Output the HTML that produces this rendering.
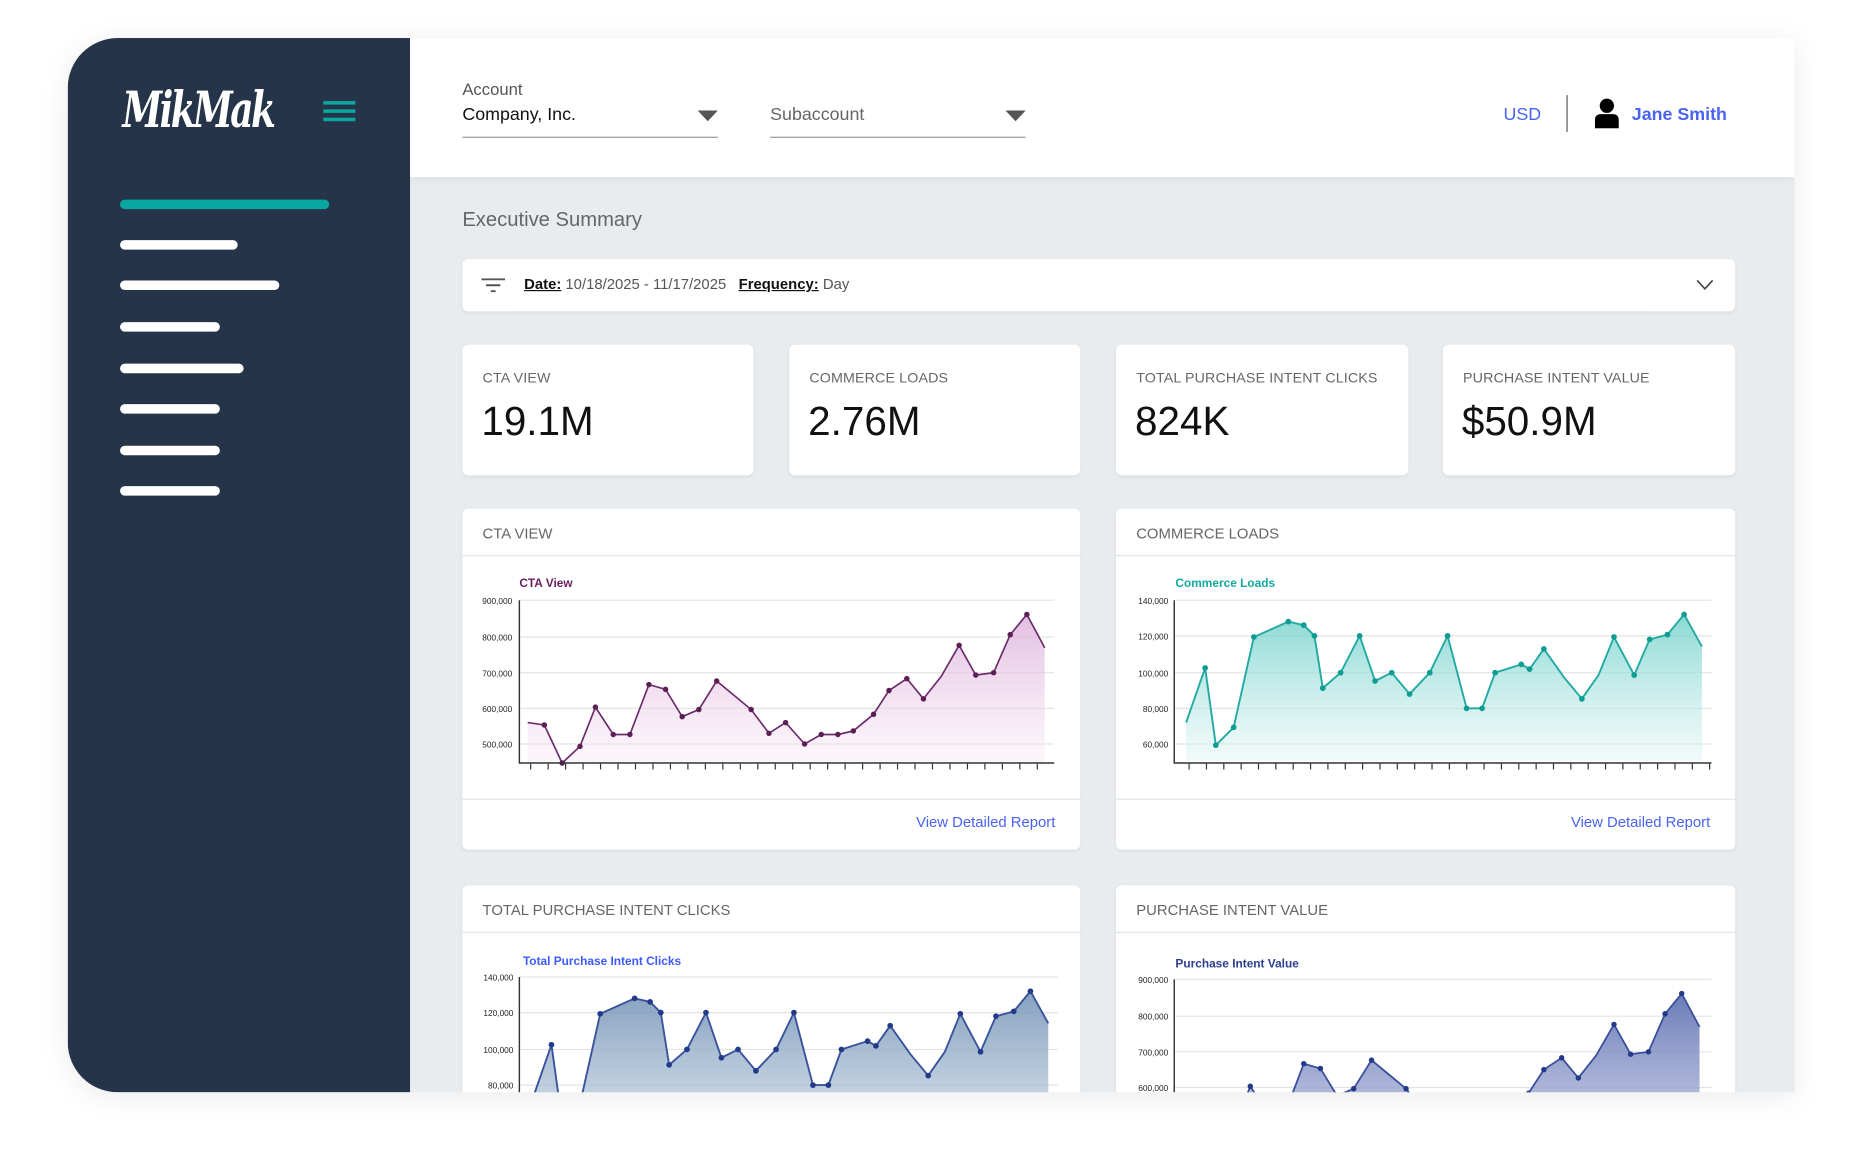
<!DOCTYPE html>
<html><head><meta charset="utf-8">
<style>
*{margin:0;padding:0;box-sizing:border-box}
html,body{width:1863px;height:1168px;overflow:hidden;background:#fff;font-family:"Liberation Sans",sans-serif}
#s{position:absolute;left:0;top:0;width:1560px;height:978px;overflow:hidden;transform:scale(1.1885);transform-origin:0 0}
.frame{position:absolute;left:57px;top:32px;width:1453px;height:887px;border-radius:42px 0 0 42px;overflow:hidden;background:#e9ecef;box-shadow:0 4px 24px rgba(0,0,0,.08)}
.side{position:absolute;left:0;top:0;width:288px;height:887px;background:#253449}
.bar{position:absolute;left:44px;height:8px;border-radius:4px;background:#fff}
.hdr{position:absolute;left:288px;top:0;width:1165px;height:117px;background:#fff;box-shadow:0 2px 6px rgba(0,0,0,.06)}
.a{position:absolute;white-space:nowrap}
.card{position:absolute;background:#fff;border-radius:5px;box-shadow:0 1px 3px rgba(0,0,0,.07)}
.kl{position:absolute;left:17px;top:21px;font-size:12px;color:#666;letter-spacing:.1px}
.kv{position:absolute;left:16px;top:46px;font-size:34px;color:#111;font-weight:300}
.ch{position:absolute;left:17px;top:14px;font-size:12.5px;color:#666}
.ln{position:absolute;left:0;right:0;height:1px;background:#e2e4e7}
.lk{position:absolute;right:21px;font-size:12.5px;color:#4a63f0}
</style></head><body><div id="s">
<div class="frame">
 <div class="side">
  <div class="a" style="left:46px;top:36px;font-size:42px;font-weight:bold;font-style:italic;color:#fff;letter-spacing:-3px;font-family:'DejaVu Serif','Liberation Serif',serif;transform:scaleX(.72);transform-origin:0 0">MikMak</div>
  <div style="position:absolute;left:215px;top:53px;width:27px;height:3px;background:#0aa6a2"></div>
  <div style="position:absolute;left:215px;top:60px;width:27px;height:3px;background:#0aa6a2"></div>
  <div style="position:absolute;left:215px;top:67px;width:27px;height:3px;background:#0aa6a2"></div>
  <div class="bar" style="top:136px;width:176px;background:#0aa6a2"></div>
  <div class="bar" style="top:170px;width:99px"></div>
  <div class="bar" style="top:204px;width:134px"></div>
  <div class="bar" style="top:239px;width:84px"></div>
  <div class="bar" style="top:274px;width:104px"></div>
  <div class="bar" style="top:308px;width:84px"></div>
  <div class="bar" style="top:343px;width:84px"></div>
  <div class="bar" style="top:377px;width:84px"></div>
 </div>
 <div class="hdr">
  <div class="a" style="left:44px;top:35px;font-size:14px;color:#555">Account</div>
  <div class="a" style="left:44px;top:56px;font-size:15px;color:#111">Company, Inc.</div>
  <div style="position:absolute;left:44px;top:83px;width:215px;height:1px;background:#999"></div>
  <svg style="position:absolute;left:242px;top:61px" width="17" height="9"><path d="M0 0H17L8.5 9Z" fill="#555"/></svg>
  <div class="a" style="left:303px;top:56px;font-size:15px;color:#666">Subaccount</div>
  <div style="position:absolute;left:303px;top:83px;width:215px;height:1px;background:#999"></div>
  <svg style="position:absolute;left:501px;top:61px" width="17" height="9"><path d="M0 0H17L8.5 9Z" fill="#555"/></svg>
  <div class="a" style="left:920px;top:56px;font-size:15px;color:#4a63f0">USD</div>
  <div style="position:absolute;left:973px;top:48px;width:1px;height:31px;background:#555"></div>
  <svg style="position:absolute;left:996px;top:50px" width="22" height="26"><circle cx="11" cy="7" r="6" fill="#000"/><path d="M1 26V19Q1 14 6 14H16Q21 14 21 19V26Z" fill="#000"/></svg>
  <div class="a" style="left:1028px;top:56px;font-size:15px;color:#4a63f0;font-weight:bold">Jane Smith</div>
 </div>
 <div class="a" style="left:332px;top:143px;font-size:17px;color:#666">Executive Summary</div>
 <div class="card" style="left:332px;top:186px;width:1071px;height:44px">
  <svg style="position:absolute;left:16px;top:16px" width="20" height="13"><path d="M0 1H20M4 6H16M8 11H12" stroke="#555" stroke-width="1.6"/></svg>
  <div class="a" style="left:52px;top:14px;font-size:12.5px;color:#555"><b style="color:#111;text-decoration:underline;font-weight:bold">Date:</b> 10/18/2025 - 11/17/2025 &nbsp;&nbsp;<b style="color:#111;text-decoration:underline">Frequency:</b> Day</div>
  <svg style="position:absolute;left:1038px;top:17px" width="15" height="9"><path d="M1 1L7.5 8L14 1" stroke="#444" stroke-width="1.4" fill="none"/></svg>
 </div>
 <div class="card" style="left:332px;top:258px;width:245px;height:110px"><div class="kl">CTA VIEW</div><div class="kv">19.1M</div></div>
 <div class="card" style="left:607px;top:258px;width:245px;height:110px"><div class="kl">COMMERCE LOADS</div><div class="kv">2.76M</div></div>
 <div class="card" style="left:882px;top:258px;width:246px;height:110px"><div class="kl">TOTAL PURCHASE INTENT CLICKS</div><div class="kv">824K</div></div>
 <div class="card" style="left:1157px;top:258px;width:246px;height:110px"><div class="kl">PURCHASE INTENT VALUE</div><div class="kv">$50.9M</div></div>

 <div class="card" style="left:332px;top:396px;width:520px;height:287px"><div class="ch">CTA VIEW</div><div class="ln" style="top:39px"></div><div class="ln" style="top:244px"></div><div class="lk" style="top:257px">View Detailed Report</div></div>
 <div class="card" style="left:882px;top:396px;width:521px;height:287px"><div class="ch">COMMERCE LOADS</div><div class="ln" style="top:39px"></div><div class="ln" style="top:244px"></div><div class="lk" style="top:257px">View Detailed Report</div></div>
 <div class="card" style="left:332px;top:713px;width:520px;height:300px"><div class="ch">TOTAL PURCHASE INTENT CLICKS</div><div class="ln" style="top:39px"></div></div>
 <div class="card" style="left:882px;top:713px;width:521px;height:300px"><div class="ch">PURCHASE INTENT VALUE</div><div class="ln" style="top:39px"></div></div>

 <svg style="position:absolute;left:-57px;top:-32px" width="1560" height="978" viewBox="0 0 1560 978" font-family="Liberation Sans,sans-serif">
  <defs>
   <linearGradient id="gp" x1="0" y1="0" x2="0" y2="1"><stop offset="0" stop-color="#d9a8d6" stop-opacity=".75"/><stop offset="1" stop-color="#f6e9f5" stop-opacity=".4"/></linearGradient>
   <linearGradient id="gt" x1="0" y1="0" x2="0" y2="1"><stop offset="0" stop-color="#6ccfc8" stop-opacity=".8"/><stop offset="1" stop-color="#e4f6f5" stop-opacity=".5"/></linearGradient>
   <linearGradient id="gb" x1="0" y1="0" x2="0" y2="1"><stop offset="0" stop-color="#6f8fb3" stop-opacity=".85"/><stop offset="1" stop-color="#c9d7e6" stop-opacity=".7"/></linearGradient>
   <linearGradient id="gv" x1="0" y1="0" x2="0" y2="1"><stop offset="0" stop-color="#5a6db0" stop-opacity=".9"/><stop offset="1" stop-color="#c5cbe6" stop-opacity=".7"/></linearGradient>
  </defs>
  <g>
   <text x="437" y="494" font-size="10" font-weight="bold" fill="#6b2160">CTA View</text>
   <g stroke="#e3e3e3" stroke-width="1"><path d="M437 505H887M437 536H887M437 566H887M437 596H887M437 626H887"/></g>
   <g font-size="7" fill="#222" text-anchor="end"><text x="431" y="508">900,000</text><text x="431" y="539">800,000</text><text x="431" y="569">700,000</text><text x="431" y="599">600,000</text><text x="431" y="629">500,000</text></g>
   <polygon fill="url(#gp)" points="444,608 458,610 473,642 488,628 501,595 516,618 530,618 546,576 560,580 574,603 588,597 603,573 632,597 647,617 661,608 677,626 691,618 705,618 718,615 735,601 748,581 763,571 777,588 792,569 807,543 821,568 836,566 850,534 864,517 879,545 879,642 444,642"/>
   <polyline fill="none" stroke="#6b2c6a" stroke-width="1.4" points="444,608 458,610 473,642 488,628 501,595 516,618 530,618 546,576 560,580 574,603 588,597 603,573 632,597 647,617 661,608 677,626 691,618 705,618 718,615 735,601 748,581 763,571 777,588 792,569 807,543 821,568 836,566 850,534 864,517 879,545"/>
   <g fill="#5c1f55"><circle cx="458" cy="610" r="2.3"/><circle cx="473" cy="642" r="2.3"/><circle cx="488" cy="628" r="2.3"/><circle cx="501" cy="595" r="2.3"/><circle cx="516" cy="618" r="2.3"/><circle cx="530" cy="618" r="2.3"/><circle cx="546" cy="576" r="2.3"/><circle cx="560" cy="580" r="2.3"/><circle cx="574" cy="603" r="2.3"/><circle cx="588" cy="597" r="2.3"/><circle cx="603" cy="573" r="2.3"/><circle cx="632" cy="597" r="2.3"/><circle cx="647" cy="617" r="2.3"/><circle cx="661" cy="608" r="2.3"/><circle cx="677" cy="626" r="2.3"/><circle cx="691" cy="618" r="2.3"/><circle cx="705" cy="618" r="2.3"/><circle cx="718" cy="615" r="2.3"/><circle cx="735" cy="601" r="2.3"/><circle cx="748" cy="581" r="2.3"/><circle cx="763" cy="571" r="2.3"/><circle cx="777" cy="588" r="2.3"/><circle cx="807" cy="543" r="2.3"/><circle cx="821" cy="568" r="2.3"/><circle cx="836" cy="566" r="2.3"/><circle cx="850" cy="534" r="2.3"/><circle cx="864" cy="517" r="2.3"/></g>
   <path d="M437 505V642H887" fill="none" stroke="#333" stroke-width="1.2"/>
   <line x1="446" y1="645" x2="887" y2="645" stroke="#333" stroke-width="5" stroke-dasharray="1 13.7"/>
  </g>
  <g>
   <text x="989" y="494" font-size="10" font-weight="bold" fill="#13a89e">Commerce Loads</text>
   <g stroke="#e3e3e3"><path d="M988 505H1440M988 535H1440M988 566H1440M988 596H1440M988 626H1440"/></g>
   <g font-size="7" fill="#222" text-anchor="end"><text x="983" y="508">140,000</text><text x="983" y="538">120,000</text><text x="983" y="569">100,000</text><text x="983" y="599">80,000</text><text x="983" y="629">60,000</text></g>
   <polygon fill="url(#gt)" points="998,608 1014,562 1023,627 1038,612 1055,536 1084,523 1097,526 1106,535 1113,579 1128,566 1144,535 1157,573 1171,566 1186,584 1203,566 1218,535 1234,596 1247,596 1258,566 1280,559 1287,563 1299,546 1316,570 1331,588 1345,568 1358,536 1375,568 1388,538 1403,534 1417,517 1432,544 1432,640 998,640"/>
   <polyline fill="none" stroke="#22aaa2" stroke-width="1.6" points="998,608 1014,562 1023,627 1038,612 1055,536 1084,523 1097,526 1106,535 1113,579 1128,566 1144,535 1157,573 1171,566 1186,584 1203,566 1218,535 1234,596 1247,596 1258,566 1280,559 1287,563 1299,546 1316,570 1331,588 1345,568 1358,536 1375,568 1388,538 1403,534 1417,517 1432,544"/>
   <g fill="#0e9c93"><circle cx="1014" cy="562" r="2.4"/><circle cx="1023" cy="627" r="2.4"/><circle cx="1038" cy="612" r="2.4"/><circle cx="1055" cy="536" r="2.4"/><circle cx="1084" cy="523" r="2.4"/><circle cx="1097" cy="526" r="2.4"/><circle cx="1106" cy="535" r="2.4"/><circle cx="1113" cy="579" r="2.4"/><circle cx="1128" cy="566" r="2.4"/><circle cx="1144" cy="535" r="2.4"/><circle cx="1157" cy="573" r="2.4"/><circle cx="1171" cy="566" r="2.4"/><circle cx="1186" cy="584" r="2.4"/><circle cx="1203" cy="566" r="2.4"/><circle cx="1218" cy="535" r="2.4"/><circle cx="1234" cy="596" r="2.4"/><circle cx="1247" cy="596" r="2.4"/><circle cx="1258" cy="566" r="2.4"/><circle cx="1280" cy="559" r="2.4"/><circle cx="1287" cy="563" r="2.4"/><circle cx="1299" cy="546" r="2.4"/><circle cx="1331" cy="588" r="2.4"/><circle cx="1358" cy="536" r="2.4"/><circle cx="1375" cy="568" r="2.4"/><circle cx="1388" cy="538" r="2.4"/><circle cx="1403" cy="534" r="2.4"/><circle cx="1417" cy="517" r="2.4"/></g>
   <path d="M988 505V642H1440" fill="none" stroke="#333" stroke-width="1.2"/>
   <line x1="1000" y1="645" x2="1440" y2="645" stroke="#333" stroke-width="5" stroke-dasharray="1 13.6"/>
  </g>
  <g>
   <text x="440" y="812" font-size="10" font-weight="bold" fill="#3d5afe">Total Purchase Intent Clicks</text>
   <g stroke="#e3e3e3"><path d="M437 822H890M437 852H890M437 883H890M437 913H890"/></g>
   <g font-size="7" fill="#222" text-anchor="end"><text x="432" y="825">140,000</text><text x="432" y="855">120,000</text><text x="432" y="886">100,000</text><text x="432" y="916">80,000</text></g>
   <g transform="translate(-550,317)">
    <polygon fill="url(#gb)" points="998,608 1014,562 1023,627 1038,612 1055,536 1084,523 1097,526 1106,535 1113,579 1128,566 1144,535 1157,573 1171,566 1186,584 1203,566 1218,535 1234,596 1247,596 1258,566 1280,559 1287,563 1299,546 1316,570 1331,588 1345,568 1358,536 1375,568 1388,538 1403,534 1417,517 1432,544 1432,640 998,640"/>
    <polyline fill="none" stroke="#3a549c" stroke-width="1.6" points="998,608 1014,562 1023,627 1038,612 1055,536 1084,523 1097,526 1106,535 1113,579 1128,566 1144,535 1157,573 1171,566 1186,584 1203,566 1218,535 1234,596 1247,596 1258,566 1280,559 1287,563 1299,546 1316,570 1331,588 1345,568 1358,536 1375,568 1388,538 1403,534 1417,517 1432,544"/>
    <g fill="#233a8a"><circle cx="1014" cy="562" r="2.4"/><circle cx="1055" cy="536" r="2.4"/><circle cx="1084" cy="523" r="2.4"/><circle cx="1097" cy="526" r="2.4"/><circle cx="1106" cy="535" r="2.4"/><circle cx="1113" cy="579" r="2.4"/><circle cx="1128" cy="566" r="2.4"/><circle cx="1144" cy="535" r="2.4"/><circle cx="1157" cy="573" r="2.4"/><circle cx="1171" cy="566" r="2.4"/><circle cx="1186" cy="584" r="2.4"/><circle cx="1203" cy="566" r="2.4"/><circle cx="1218" cy="535" r="2.4"/><circle cx="1234" cy="596" r="2.4"/><circle cx="1247" cy="596" r="2.4"/><circle cx="1258" cy="566" r="2.4"/><circle cx="1280" cy="559" r="2.4"/><circle cx="1287" cy="563" r="2.4"/><circle cx="1299" cy="546" r="2.4"/><circle cx="1331" cy="588" r="2.4"/><circle cx="1358" cy="536" r="2.4"/><circle cx="1375" cy="568" r="2.4"/><circle cx="1388" cy="538" r="2.4"/><circle cx="1403" cy="534" r="2.4"/><circle cx="1417" cy="517" r="2.4"/></g>
   </g>
   <path d="M437 822V960" fill="none" stroke="#333" stroke-width="1.2"/>
  </g>
  <g>
   <text x="989" y="814" font-size="10" font-weight="bold" fill="#2c3e8f">Purchase Intent Value</text>
   <g stroke="#e3e3e3"><path d="M988 824H1440M988 855H1440M988 885H1440M988 915H1440"/></g>
   <g font-size="7" fill="#222" text-anchor="end"><text x="983" y="827">900,000</text><text x="983" y="858">800,000</text><text x="983" y="888">700,000</text><text x="983" y="918">600,000</text></g>
   <g transform="translate(551,319)">
    <polygon fill="url(#gv)" points="444,608 458,610 473,642 488,628 501,595 516,618 530,618 546,576 560,580 574,603 588,597 603,573 632,597 647,617 661,608 677,626 691,618 705,618 718,615 735,601 748,581 763,571 777,588 792,569 807,543 821,568 836,566 850,534 864,517 879,545 879,660 444,660"/>
    <polyline fill="none" stroke="#3a4f9a" stroke-width="1.5" points="444,608 458,610 473,642 488,628 501,595 516,618 530,618 546,576 560,580 574,603 588,597 603,573 632,597 647,617 661,608 677,626 691,618 705,618 718,615 735,601 748,581 763,571 777,588 792,569 807,543 821,568 836,566 850,534 864,517 879,545"/>
    <g fill="#233a8a"><circle cx="501" cy="595" r="2.3"/><circle cx="546" cy="576" r="2.3"/><circle cx="560" cy="580" r="2.3"/><circle cx="588" cy="597" r="2.3"/><circle cx="603" cy="573" r="2.3"/><circle cx="632" cy="597" r="2.3"/><circle cx="735" cy="601" r="2.3"/><circle cx="748" cy="581" r="2.3"/><circle cx="763" cy="571" r="2.3"/><circle cx="777" cy="588" r="2.3"/><circle cx="807" cy="543" r="2.3"/><circle cx="821" cy="568" r="2.3"/><circle cx="836" cy="566" r="2.3"/><circle cx="850" cy="534" r="2.3"/><circle cx="864" cy="517" r="2.3"/></g>
   </g>
   <path d="M988 824V960" fill="none" stroke="#333" stroke-width="1.2"/>
  </g>
 </svg>
</div>
</div></body></html>
